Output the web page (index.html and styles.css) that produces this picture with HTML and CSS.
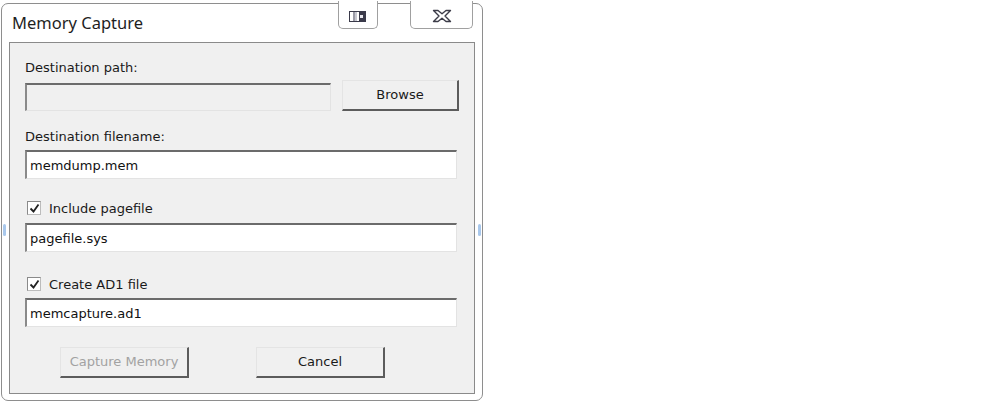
FILE: index.html
```html
<!DOCTYPE html>
<html lang="en">
<head>
  <meta charset="UTF-8">
  <title>Memory Capture</title>
  <link rel="stylesheet" href="styles.css">
</head>
<body>
  <div class="window">
    <div class="titlebar">
      <span class="title">Memory Capture</span>
      <div class="caption">
        <span class="cap-btn tray">
          <svg width="18" height="11" viewBox="0 0 18 11">
            <rect x="0.5" y="0.5" width="16" height="10" fill="#fff" stroke="#3a3a4a"/>
            <rect x="4" y="1" width="2" height="9" fill="#9a9aa6"/>
            <rect x="6" y="1" width="2" height="9" fill="#c8c8d0"/>
            <rect x="10" y="1" width="7" height="9" fill="#3a3a4a"/>
            <rect x="11" y="4" width="3" height="3" fill="#e8e8ee"/>
          </svg>
        </span>
        <span class="cap-btn close">
          <svg width="20" height="14" viewBox="0 0 20 14">
            <path d="M1.5 1.5h4.5l4 3.3 4-3.3h4.5l-5.5 5.5 5.5 5.5h-4.5l-4-3.3-4 3.3h-4.5l5.5-5.5z" fill="#fff" stroke="#3c3c48" stroke-width="1.4" stroke-linejoin="round"/>
          </svg>
        </span>
      </div>
    </div>

    <div class="client">
      <div class="label">Destination path:</div>
      <div class="path-row">
        <div class="field disabled"></div>
        <div class="button browse">Browse</div>
      </div>

      <div class="label second">Destination filename:</div>
      <div class="field">memdump.mem</div>

      <div class="check-row">
        <span class="checkbox">
          <svg width="11" height="11" viewBox="0 0 11 11"><path d="M1.5 5.5l3 3 5-7" fill="none" stroke="#222" stroke-width="1.8"/></svg>
        </span>
        <span>Include pagefile</span>
      </div>
      <div class="field">pagefile.sys</div>

      <div class="check-row">
        <span class="checkbox">
          <svg width="11" height="11" viewBox="0 0 11 11"><path d="M1.5 5.5l3 3 5-7" fill="none" stroke="#222" stroke-width="1.8"/></svg>
        </span>
        <span>Create AD1 file</span>
      </div>
      <div class="field">memcapture.ad1</div>

      <div class="actions">
        <div class="button inactive">Capture Memory</div>
        <div class="button">Cancel</div>
      </div>
    </div>
    <span class="glow left"></span>
    <span class="glow right"></span>
  </div>
</body>
</html>
```

FILE: styles.css
```css
body {
  margin: 0;
  background-color: #fff;
  font-family: "DejaVu Sans", Tahoma, sans-serif;
  font-size: 13px;
  color: #1a1a1a;
}
.window {
  position: relative;
  margin: 3px 0 0 1px;
  width: 480px;
  height: 396px;
  border: 1px solid #8e8e8e;
  border-radius: 7px;
  background-color: #fff;
  display: flex;
  flex-direction: column;
}
.titlebar {
  height: 38px;
  display: flex;
  justify-content: space-between;
  align-items: flex-start;
}
.title {
  font-family: "Noto Sans", sans-serif;
  font-size: 16.5px;
  color: #1e1e1e;
  margin: 7px 0 0 10px;
}
.caption {
  display: flex;
  gap: 32px;
  margin: -3px 9px 0 0;
}
.cap-btn {
  display: flex;
  align-items: center;
  justify-content: center;
  height: 28px;
  border: 1px solid #a0a0a0;
  border-top: none;
  border-radius: 0 0 5px 5px;
  background-color: #fff;
  padding-top: 3px;
  box-sizing: border-box;
}
.tray {
  width: 40px;
}
.close {
  width: 63px;
}
.client {
  flex: 1;
  margin: 0 7px 6px 7px;
  border: 1px solid #8a8a8a;
  background-color: #f0f0f0;
  padding: 17px 0 0 15px;
}
.label {
  height: 16px;
  line-height: 16px;
}
.label.second {
  margin-top: 18px;
}
.path-row {
  display: flex;
  align-items: flex-start;
  gap: 11px;
  margin-top: 4px;
}
.field {
  width: 432px;
  height: 29px;
  box-sizing: border-box;
  background-color: #fff;
  border: 1px solid #e3e3e3;
  border-top: 2px solid #6b6b6b;
  border-left: 2px solid #8a8a8a;
  padding: 5px 0 0 3px;
  line-height: 18px;
  color: #111;
}
.label.second + .field {
  margin-top: 5px;
}
.field.disabled {
  width: 306px;
  height: 28px;
  margin-top: 3px;
  background-color: #f0f0f0;
}
.button {
  box-sizing: border-box;
  width: 129px;
  height: 31px;
  background-color: #f0f0f0;
  border: 1px solid #e4e4e4;
  border-right: 2px solid #5c5c5c;
  border-bottom: 2px solid #5c5c5c;
  display: flex;
  align-items: center;
  justify-content: center;
  padding-bottom: 2px;
}
.browse {
  width: 117px;
}
.button.inactive {
  color: #a2a2a2;
}
.check-row {
  display: flex;
  align-items: center;
  gap: 8px;
  margin: 21px 0 7px 2px;
  height: 16px;
}
.field + .check-row + .field + .check-row {
  margin: 24px 0 6px 2px;
}
.checkbox {
  width: 14px;
  height: 14px;
  box-sizing: border-box;
  border: 1px solid #bcbcbc;
  border-top-color: #8a8a8a;
  border-left-color: #8a8a8a;
  background-color: #fff;
  display: flex;
  align-items: center;
  justify-content: center;
}
.actions {
  display: flex;
  gap: 67px;
  margin: 20px 0 0 35px;
}
.glow {
  position: absolute;
  top: 220px;
  width: 3px;
  height: 12px;
  border-radius: 2px;
  background-color: #a9c8ec;
}
.glow.left {
  left: 1px;
}
.glow.right {
  right: 1px;
}
```
